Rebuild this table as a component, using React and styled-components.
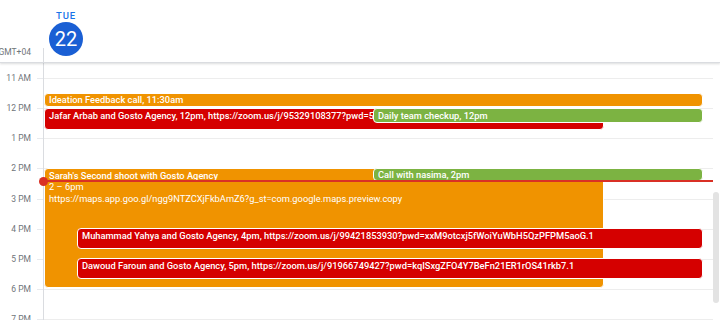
import React from "react";
import styled, { createGlobalStyle } from "styled-components";

const HOUR = 30.15;
const TOP = 15;
const y = (h) => TOP + (h - 11) * HOUR;

const Global = createGlobalStyle`
  html, body { margin: 0; padding: 0; background: #fff; }
  body { font-family: Roboto, "Noto Sans", Arial, sans-serif; overflow: hidden; }
`;

const Page = styled.div`
  width: 720px;
  height: 320px;
  overflow: hidden;
  position: relative;
  background: #fff;
`;

const Header = styled.div`
  display: flex;
  height: 62px;
  border-bottom: 1px solid #dadce0;
  box-shadow: 0 1px 2px rgba(60, 64, 67, 0.18);
  position: relative;
  z-index: 2;
  background: #fff;
`;

const Zone = styled.div`
  width: 43px;
  flex: none;
  display: flex;
  align-items: flex-end;
  justify-content: flex-end;
  padding: 0 12px 5px 0;
  box-sizing: border-box;
  font-size: 8.5px;
  color: #70757a;
  white-space: nowrap;
`;

const DayHead = styled.div`
  flex: 1;
  position: relative;
  display: flex;
  flex-direction: column;
  align-items: flex-start;
  padding: 10px 0 0 6px;
  &::before {
    content: "";
    position: absolute;
    left: 0;
    bottom: 0;
    width: 1px;
    height: 14px;
    background: #dadce0;
  }
`;

const DayName = styled.div`
  width: 34px;
  text-align: center;
  font-size: 9.5px;
  font-weight: 500;
  letter-spacing: 0.8px;
  color: #1a73e8;
  line-height: 11px;
`;

const DayNum = styled.div`
  width: 34px;
  height: 34px;
  margin-top: 1px;
  border-radius: 50%;
  background: #1a5fd4;
  color: #fff;
  display: flex;
  align-items: center;
  justify-content: center;
  font-size: 20px;
  font-weight: 400;
`;

const Body = styled.div`
  display: flex;
  height: 257px;
  position: relative;
`;

const Gutter = styled.div`
  width: 43px;
  flex: none;
  display: flex;
  flex-direction: column;
`;

const GutterSpacer = styled.div`
  height: ${TOP}px;
  flex: none;
`;

const HourLabel = styled.div`
  height: ${HOUR}px;
  flex: none;
  position: relative;
  &::after {
    content: "";
    position: absolute;
    right: 0;
    top: 0;
    width: 6px;
    height: 1px;
    background: #e8eaed;
  }
  span {
    position: absolute;
    right: 12px;
    top: -6px;
    font-size: 8.5px;
    line-height: 12px;
    color: #70757a;
    white-space: nowrap;
  }
`;

const Day = styled.div`
  flex: none;
  width: 669px;
  position: relative;
  border-left: 1px solid #dadce0;
  display: flex;
  flex-direction: column;
`;

const Row = styled.div`
  height: ${HOUR}px;
  flex: none;
  box-sizing: border-box;
  border-top: 1px solid #ededed;
`;

const Event = styled.div`
  position: absolute;
  box-sizing: border-box;
  border: 1px solid #fff;
  border-radius: 4px;
  background: ${(p) => p.$color};
  color: #fff;
  font-size: 9.3px;
  line-height: 11.5px;
  padding: ${(p) => p.$pad || "0 4px"};
  overflow: hidden;
  white-space: nowrap;
  z-index: ${(p) => p.$z || 1};
`;

const Title = styled.div`
  font-weight: 500;
`;

const Line = styled.div`
  font-weight: 400;
`;

const NowLine = styled.div`
  position: absolute;
  left: -1px;
  right: 0;
  height: 1.5px;
  background: #d93025;
  z-index: 5;
  &::before {
    content: "";
    position: absolute;
    left: -4px;
    top: -3.5px;
    width: 9px;
    height: 9px;
    border-radius: 50%;
    background: #d93025;
  }
`;

const Scroll = styled.div`
  position: absolute;
  right: 1px;
  top: 129px;
  width: 6px;
  height: 111px;
  border-radius: 3px;
  background: #e3e3e3;
`;

const ORANGE = "#f09300";
const RED = "#d50000";
const GREEN = "#7cb342";

const hours = ["11 AM", "12 PM", "1 PM", "2 PM", "3 PM", "4 PM", "5 PM", "6 PM", "7 PM"];

const events = [
  { top: y(11.5) - 0.5, left: 0, width: 659, height: 14, color: ORANGE, z: 1, lines: ["Ideation Feedback call, 11:30am"] },
  { top: y(12) - 0.5, left: 0, width: 560, height: 22, color: RED, z: 2, pad: "1px 4px", lines: ["Jafar Arbab and Gosto Agency, 12pm, https://zoom.us/j/95329108377?pwd=5Sm5Y1dXQWZCMmVZVlk"] },
  { top: y(12) - 0.5, left: 329, width: 330, height: 15, color: GREEN, z: 3, pad: "1px 4px", lines: ["Daily team checkup, 12pm"] },
  {
    top: y(14) - 0.5,
    left: 0,
    width: 560,
    height: 120,
    color: ORANGE,
    z: 1,
    pad: "1px 4px",
    lines: ["Sarah's Second shoot with Gosto Agency", "2 – 6pm", "https://maps.app.goo.gl/ngg9NTZCXjFkbAmZ6?g_st=com.google.maps.preview.copy"],
  },
  { top: y(14) - 0.5, left: 329, width: 330, height: 13, color: GREEN, z: 3, lines: ["Call with nasima, 2pm"] },
  { top: y(16) - 0.5, left: 33, width: 626, height: 21, color: RED, z: 2, pad: "1px 4px", lines: ["Muhammad Yahya and Gosto Agency, 4pm, https://zoom.us/j/99421853930?pwd=xxM9otcxj5fWoiYuWbH5QzPFPM5aoG.1"] },
  { top: y(17) - 0.5, left: 33, width: 626, height: 21, color: RED, z: 2, pad: "1px 4px", lines: ["Dawoud Faroun and Gosto Agency, 5pm, https://zoom.us/j/91966749427?pwd=kqISxgZFO4Y7BeFn21ER1rOS41rkb7.1"] },
];

export default function App() {
  return (
    <Page>
      <Global />
      <Header>
        <Zone>GMT+04</Zone>
        <DayHead>
          <DayName>TUE</DayName>
          <DayNum>22</DayNum>
        </DayHead>
      </Header>
      <Body>
        <Gutter>
          <GutterSpacer />
          {hours.map((h) => (
            <HourLabel key={h}>
              <span>{h}</span>
            </HourLabel>
          ))}
        </Gutter>
        <Day>
          <GutterSpacer />
          {hours.map((h) => (
            <Row key={h} />
          ))}
          {events.map((e, i) => (
            <Event
              key={i}
              $color={e.color}
              $z={e.z}
              $pad={e.pad}
              style={{ top: e.top, left: e.left, width: e.width, height: e.height }}
            >
              {e.lines.map((l, j) => (j === 0 ? <Title key={j}>{l}</Title> : <Line key={j}>{l}</Line>))}
            </Event>
          ))}
          <NowLine style={{ top: y(14) + 12 }} />
        </Day>
        <Scroll />
      </Body>
    </Page>
  );
}
